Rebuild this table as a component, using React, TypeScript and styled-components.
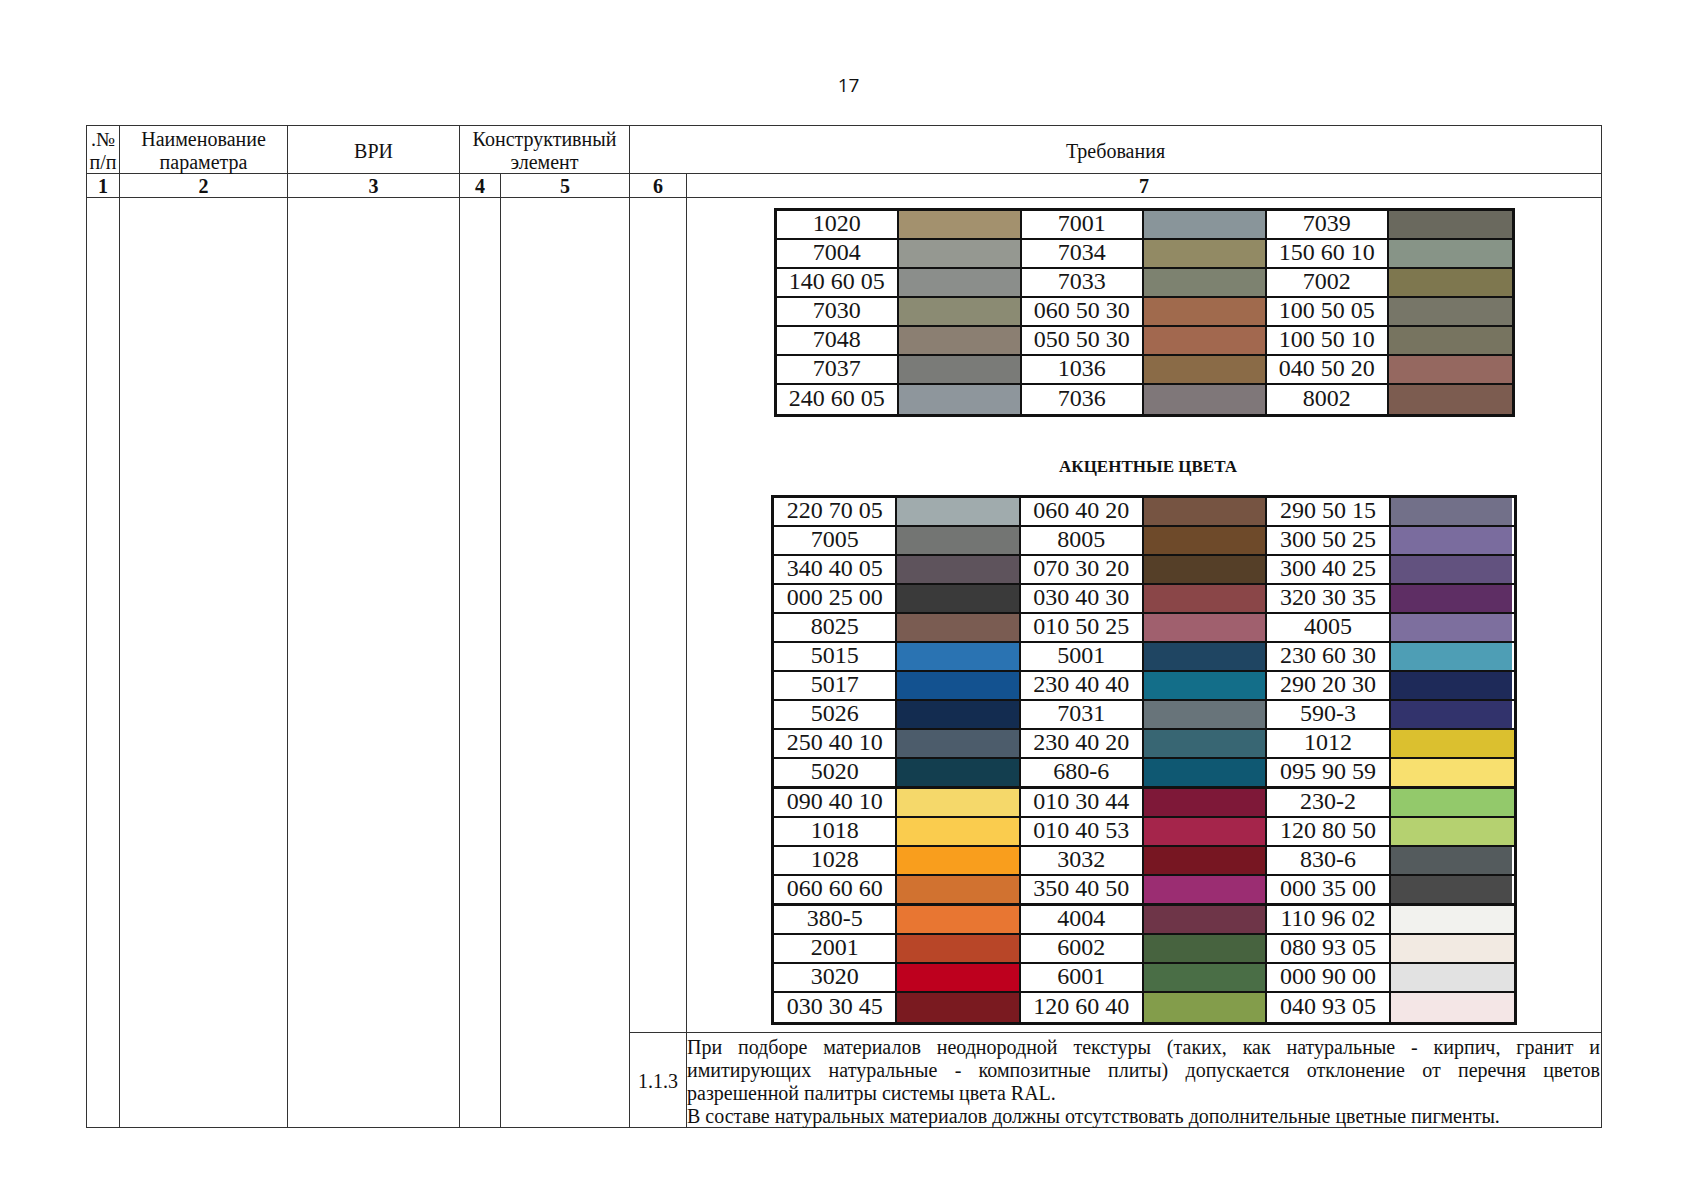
import React from "react";
import styled, { createGlobalStyle } from "styled-components";

const GlobalStyle = createGlobalStyle`
  html, body { margin: 0; padding: 0; background: #fff; }
  body { font-family: "Liberation Serif", "Times New Roman", serif; color: #111; }
`;

const Page = styled.div`
  width: 1697px;
  min-height: 1200px;
  box-sizing: border-box;
  padding-top: 73px;
  background: #fff;
`;

const PageNumber = styled.div`
  text-align: center;
  font-family: "Open Sans", "Noto Sans", sans-serif;
  font-size: 19px;
  line-height: 24px;
  color: #111;
  margin-bottom: 28px;
`;

const DocTable = styled.div`
  margin-left: 86px;
  width: max-content;
  display: grid;
  grid-template-columns: 33px 168px 172px 41px 129px 57px 915px;
  grid-template-rows: 48px 24px 835px 95px;
  border-top: 1px solid #333;
  border-left: 1px solid #333;
`;

const Cell = styled.div<{ $col: string; $row: string; $bold?: boolean; $shift?: number }>`
  grid-column: ${(p) => p.$col};
  grid-row: ${(p) => p.$row};
  box-sizing: border-box;
  border-right: 1px solid #333;
  border-bottom: 1px solid #333;
  display: flex;
  flex-direction: column;
  align-items: center;
  justify-content: center;
  text-align: center;
  padding-top: ${(p) => p.$shift ?? 0}px;
  font-size: 20px;
  line-height: 23px;
  font-weight: ${(p) => (p.$bold ? 700 : 400)};
  color: #111;
`;

const SwatchCell = styled(Cell)`
  justify-content: flex-start;
  padding-top: 10px;
`;

const TextCell = styled(Cell)`
  display: block;
  text-align: left;
  padding: 3px 1px 0 0;
`;

const ParaLine = styled.span<{ $justify?: boolean }>`
  display: block;
  text-align: ${(p) => (p.$justify ? "justify" : "left")};
  text-align-last: ${(p) => (p.$justify ? "justify" : "left")};
`;

const Palette = styled.div<{ $rows: number; $w: number; $h: number }>`
  display: grid;
  box-sizing: border-box;
  width: ${(p) => p.$w}px;
  height: ${(p) => p.$h}px;
  grid-template-columns: repeat(6, 1fr);
  grid-template-rows: repeat(${(p) => p.$rows}, 1fr);
  border: 3px solid #111;
  background: #fff;
`;

const Code = styled.div<{ $last?: boolean; $thick?: boolean }>`
  box-sizing: border-box;
  display: flex;
  align-items: center;
  justify-content: center;
  background: #fff;
  border-right: 2px solid #111;
  border-bottom: ${(p) => (p.$last ? "none" : p.$thick ? "3px solid #111" : "2px solid #111")};
  font-family: "Liberation Serif", "Times New Roman", serif;
  font-size: 24px;
  line-height: 1;
  color: #151515;
  padding-bottom: 3px;
`;

const Chip = styled.div<{ $color: string; $end?: boolean; $last?: boolean; $thick?: boolean; $edge?: boolean }>`
  box-sizing: border-box;
  background: ${(p) => p.$color};
  border-right: ${(p) => (p.$end ? "none" : "2px solid #111")};
  border-bottom: ${(p) => (p.$last ? "none" : p.$thick ? "3px solid #111" : "2px solid #111")};
  box-shadow: ${(p) => (p.$edge ? "inset -2px 0 0 #fff" : "none")};
`;

const AccentTitle = styled.div`
  font-family: "Liberation Serif", "Times New Roman", serif;
  font-weight: 700;
  font-size: 17px;
  line-height: 24px;
  margin: 38px 0 16px 8px;
  color: #111;
`;

type Pair = [string, string];
type Row = { pairs: Pair[]; thick?: boolean; edge?: boolean };

const base: Row[] = [
  { pairs: [["1020", "#A3916E"], ["7001", "#89959A"], ["7039", "#6A695E"]] },
  { pairs: [["7004", "#959891"], ["7034", "#928A64"], ["150 60 10", "#879487"]] },
  { pairs: [["140 60 05", "#8B8E8B"], ["7033", "#7D8270"], ["7002", "#7E774F"]] },
  { pairs: [["7030", "#8B8B73"], ["060 50 30", "#A06A4D"], ["100 50 05", "#777668"]] },
  { pairs: [["7048", "#8B7F72"], ["050 50 30", "#A2684F"], ["100 50 10", "#777460"]] },
  { pairs: [["7037", "#7A7B78"], ["1036", "#8A6B47"], ["040 50 20", "#956860"]] },
  { pairs: [["240 60 05", "#8E969C"], ["7036", "#7F7779"], ["8002", "#7C5C50"]] },
];

const accent: Row[] = [
  { edge: true, pairs: [["220 70 05", "#A0ABAD"], ["060 40 20", "#765442"], ["290 50 15", "#727089"]] },
  { edge: true, pairs: [["7005", "#737573"], ["8005", "#6E4A2A"], ["300 50 25", "#7A6C9E"]] },
  { edge: true, pairs: [["340 40 05", "#5E535C"], ["070 30 20", "#553F28"], ["300 40 25", "#62527F"]] },
  { edge: true, pairs: [["000 25 00", "#3A3A3A"], ["030 40 30", "#8A4648"], ["320 30 35", "#5E2E64"]] },
  { edge: true, pairs: [["8025", "#7A5C52"], ["010 50 25", "#A0606E"], ["4005", "#7D6F9E"]] },
  { edge: true, pairs: [["5015", "#2A73B2"], ["5001", "#1F4562"], ["230 60 30", "#4E9EB5"]] },
  { edge: true, pairs: [["5017", "#135290"], ["230 40 40", "#136E89"], ["290 20 30", "#1E2A59"]] },
  { edge: true, pairs: [["5026", "#132C50"], ["7031", "#68747A"], ["590-3", "#32336C"]] },
  { pairs: [["250 40 10", "#4C5C6B"], ["230 40 20", "#386673"], ["1012", "#DBC02F"]] },
  { thick: true, pairs: [["5020", "#133E4F"], ["680-6", "#0F5872"], ["095 90 59", "#F8E06F"]] },
  { pairs: [["090 40 10", "#F5D86A"], ["010 30 44", "#7E1838"], ["230-2", "#93C96B"]] },
  { pairs: [["1018", "#FACC4E"], ["010 40 53", "#A5254B"], ["120 80 50", "#B5D170"]] },
  { edge: true, pairs: [["1028", "#F99E1D"], ["3032", "#771622"], ["830-6", "#545B5D"]] },
  { edge: true, thick: true, pairs: [["060 60 60", "#D17230"], ["350 40 50", "#9B2D72"], ["000 35 00", "#4A4A4A"]] },
  { pairs: [["380-5", "#E87632"], ["4004", "#6E3548"], ["110 96 02", "#F2F2EE"]] },
  { pairs: [["2001", "#B84628"], ["6002", "#47633F"], ["080 93 05", "#F2EAE2"]] },
  { pairs: [["3020", "#BE001E"], ["6001", "#4A6E46"], ["000 90 00", "#E2E2E2"]] },
  { pairs: [["030 30 45", "#7A1A20"], ["120 60 40", "#839D4B"], ["040 93 05", "#F4E6E6"]] },
];

function PaletteTable({ rows, w, h }: { rows: Row[]; w: number; h: number }) {
  return (
    <Palette $rows={rows.length} $w={w} $h={h}>
      {rows.map((row, ri) => {
        const last = ri === rows.length - 1;
        return row.pairs.map(([code, color], pi) => (
          <React.Fragment key={`${ri}-${pi}`}>
            <Code $last={last} $thick={row.thick}>{code}</Code>
            <Chip
              $color={color}
              $end={pi === 2}
              $last={last}
              $thick={row.thick}
              $edge={pi === 2 && row.edge}
            />
          </React.Fragment>
        ));
      })}
    </Palette>
  );
}

export default function App() {
  return (
    <>
      <GlobalStyle />
      <Page>
        <PageNumber>17</PageNumber>
        <DocTable>
          <Cell $col="1" $row="1" $shift={3}>
            <span>.№</span>
            <span>п/п</span>
          </Cell>
          <Cell $col="2" $row="1" $shift={3}>
            <span>Наименование</span>
            <span>параметра</span>
          </Cell>
          <Cell $col="3" $row="1" $shift={3}>ВРИ</Cell>
          <Cell $col="4 / 6" $row="1" $shift={3}>
            <span>Конструктивный</span>
            <span>элемент</span>
          </Cell>
          <Cell $col="6 / 8" $row="1" $shift={3}>Требования</Cell>

          {["1", "2", "3", "4", "5", "6", "7"].map((n, i) => (
            <Cell key={n} $col={String(i + 1)} $row="2" $bold $shift={2}>
              {n}
            </Cell>
          ))}

          <Cell $col="1" $row="3 / 5" />
          <Cell $col="2" $row="3 / 5" />
          <Cell $col="3" $row="3 / 5" />
          <Cell $col="4" $row="3 / 5" />
          <Cell $col="5" $row="3 / 5" />
          <Cell $col="6" $row="3" />
          <SwatchCell $col="7" $row="3">
            <PaletteTable rows={base} w={741} h={209} />
            <AccentTitle>АКЦЕНТНЫЕ ЦВЕТА</AccentTitle>
            <PaletteTable rows={accent} w={746} h={530} />
          </SwatchCell>

          <Cell $col="6" $row="4" $shift={2}>1.1.3</Cell>
          <TextCell $col="7" $row="4">
            <ParaLine $justify>
              При подборе материалов неоднородной текстуры (таких, как натуральные - кирпич, гранит и
            </ParaLine>
            <ParaLine $justify>
              имитирующих натуральные - композитные плиты) допускается отклонение от перечня цветов
            </ParaLine>
            <ParaLine>разрешенной палитры системы цвета RAL.</ParaLine>
            <ParaLine>В составе натуральных материалов должны отсутствовать дополнительные цветные пигменты.</ParaLine>
          </TextCell>
        </DocTable>
      </Page>
    </>
  );
}
